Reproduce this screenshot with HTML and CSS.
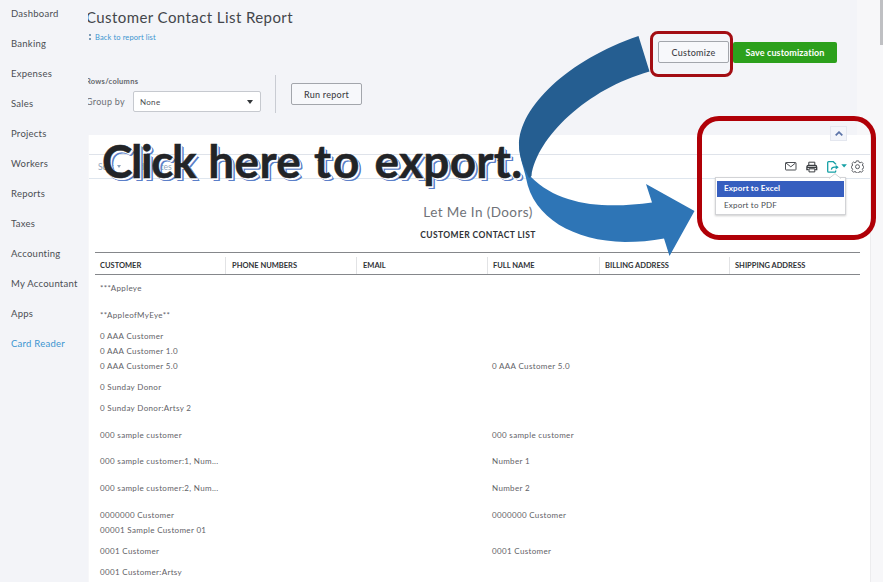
FILE: index.html
```html
<!DOCTYPE html>
<html lang="en">
<head>
<meta charset="UTF-8">
<meta name="viewport" content="width=device-width, initial-scale=1.0">
<title>Customer Contact List Report</title>
<link rel="stylesheet" href="styles.css">
</head>
<body>
    <nav class="sidebar">
        <a>Dashboard</a>
        <a>Banking</a>
        <a>Expenses</a>
        <a>Sales</a>
        <a>Projects</a>
        <a>Workers</a>
        <a>Reports</a>
        <a>Taxes</a>
        <a>Accounting</a>
        <a>My Accountant</a>
        <a>Apps</a>
        <a class="card-reader">Card Reader</a>
    </nav>

    <main class="main">
        <header class="header">
            <div class="header-left">
                <h1>Customer Contact List Report</h1>
                <div class="back"><span class="back-arrow"></span>Back to report list</div>
                <div class="filters">
                    <div class="group">
                        <div class="group-title">Rows/columns</div>
                        <div class="group-row">
                            <label>Group by</label>
                            <div class="select">None<span class="caret"></span></div>
                        </div>
                    </div>
                    <div class="divider"></div>
                    <button class="btn run">Run report</button>
                </div>
            </div>
            <div class="actions">
                <button class="btn customize">Customize</button>
                <button class="btn save">Save customization</button>
            </div>
            <div class="gutter"></div>
        </header>

        <section class="report">
            <div class="toolbar">
                <span class="sort">Sort</span><span class="sort-caret"></span>
                <span class="notes">Add notes</span>
                <div class="icons">
                    <svg class="mail" width="12" height="9" viewBox="0 0 12 9" fill="none" stroke="#4b4e53"><rect x=".5" y=".5" width="10.5" height="7.5" rx=".6"/><path d="M1 1l4.8 3.8L10.5 1"/></svg>
                    <svg class="print" width="12" height="12" viewBox="0 0 12 12" fill="none" stroke="#3a3d41"><path d="M2.8 4V1.2h6V4"/><path d="M2.5 8.7H.9V6.2q0-1.7 1.5-1.7h6.8q1.5 0 1.5 1.7v2.5H9.2" stroke-width="1.3"/><path d="M1 6.5h9.8" stroke-width="1.2"/><path d="M3 7.8h5.8v3.1H3z"/></svg>
                    <svg class="export" width="20" height="12" viewBox="0 0 20 12" fill="none" stroke="#14a0a5"><path d="M8.7 3.6V3L6.3.7H1.6q-.9 0-.9.9v8.6q0 .9.9.9h6.2q.9 0 .9-.9V9.6" stroke-width="1.3"/><path d="M4.4 8.6q.2-2.5 3-2.5h2" stroke-width="1.2"/><path d="M8.7 3.9l3 2.3-3 2.3z" fill="#14a0a5" stroke="none"/><path d="M14.3 3.2h5.6l-2.8 3.2z" fill="#14a0a5" stroke="none"/></svg>
                    <svg class="gear" width="13" height="13" viewBox="0 0 13 13" fill="none" stroke="#5c5f64"><path d="M5.3.9h2.4l.4 1.5 1 .4 1.4-.8 1.6 1.6-.8 1.4.4.9 1.1.3v1.8l-1.1.4-.4 1 .7 1.2-1.5 1.7-1.4-.8-1 .4-.4 1.1H5.3l-.4-1.1-1-.4-1.4.8L1 10.6l.7-1.2-.4-1L.3 8V6.2l1-.3.4-.9L.9 3.6 2.5 2l1.4.8 1-.4z"/><circle cx="6.5" cy="6.7" r="2"/></svg>
                </div>
            </div>
            <h2>Let Me In (Doors)</h2>
            <h3>CUSTOMER CONTACT LIST</h3>
            <div class="table">
                <div class="row head">
                    <span>CUSTOMER</span><span>PHONE NUMBERS</span><span>EMAIL</span><span>FULL NAME</span><span>BILLING ADDRESS</span><span>SHIPPING ADDRESS</span>
                </div>
                <div class="row tall"><span>***Appleye</span></div>
                <div class="row mid"><span>**AppleofMyEye**</span></div>
                <div class="row"><span>0 AAA Customer</span></div>
                <div class="row"><span>0 AAA Customer 1.0</span></div>
                <div class="row mid"><span>0 AAA Customer 5.0</span><span class="full">0 AAA Customer 5.0</span></div>
                <div class="row mid"><span>0 Sunday Donor</span></div>
                <div class="row tall"><span>0 Sunday Donor:Artsy 2</span></div>
                <div class="row tall"><span>000 sample customer</span><span class="full">000 sample customer</span></div>
                <div class="row tall"><span>000 sample customer:1, Num...</span><span class="full">Number 1</span></div>
                <div class="row tall"><span>000 sample customer:2, Num...</span><span class="full">Number 2</span></div>
                <div class="row"><span>0000000 Customer</span><span class="full">0000000 Customer</span></div>
                <div class="row mid"><span>00001 Sample Customer 01</span></div>
                <div class="row mid"><span>0001 Customer</span><span class="full">0001 Customer</span></div>
                <div class="row mid"><span>0001 Customer:Artsy</span></div>
            </div>
        </section>
    </main>

    <!-- page overlays -->
    <div class="collapse"><svg width="8" height="5" viewBox="0 0 8 5" fill="none" stroke="#5c74a8" stroke-width="1.8"><path d="M.7 4.3L4 1.2l3.3 3.1"/></svg></div>
    <div class="menu">
        <div class="menu-item active">Export to Excel</div>
        <div class="menu-item">Export to PDF</div>
    </div>
    <svg class="menu-tip" width="12" height="6" viewBox="0 0 12 6" fill="#fff" stroke="#d2d3d6"><path d="M0 5.500L6 .7l6 4.800"/></svg>
    <div class="scroll-thumb"></div>

    <!-- callouts -->
    <div class="callout-text"><span class="tight">Click</span> here <span class="loose">to</span> export.</div>
    <svg class="arrow" width="883" height="300" viewBox="0 0 883 300">
        <path fill="#2e75b6" d="M519 145C520 160 524 168 526 178C533 218 574 241 625 242Q645 242 664 238.500L669.500 256L694.500 211L646 184L652 202.500C605 209 560 206 531 177Z"/>
        <path fill="#255e91" d="M638.500 36C568 60 519 107 519 145C519 158 524 167 529 178L531.500 176C537 137 587 89 649.500 71.500Z"/>
    </svg>
    <div class="ring ring-customize"></div>
    <div class="ring ring-export"></div>
</body>
</html>
```

FILE: styles.css
```css
* {
    box-sizing: border-box;
}

body {
    margin: 0;
    display: flex;
    width: 883px;
    height: 582px;
    overflow: hidden;
    position: relative;
    background-color: #f7f7f9;
    font-family: Lato, sans-serif;
    color: #4b4e53;
}

h1, h2, h3 {
    margin: 0;
    font-weight: normal;
}

.sidebar {
    width: 88px;
    flex: none;
    padding-left: 11px;
    background-color: #f3f4f8;
}

.sidebar a {
    display: block;
    height: 30px;
    line-height: 28px;
    font-size: 9.5px;
    letter-spacing: 0.25px;
    white-space: nowrap;
}

.sidebar .card-reader {
    color: #3c94d0;
}

.main {
    width: 792px;
    overflow: hidden;
}

.header {
    display: flex;
    height: 135px;
    background-color: #f3f4f8;
}

.header-left {
    width: 570px;
    margin-left: -1px;
    padding-top: 7px;
}

h1 {
    font-size: 15px;
    line-height: 20px;
    letter-spacing: 0.42px;
    text-indent: -1px;
    color: #43464b;
}

.back {
    display: flex;
    align-items: center;
    height: 20px;
    font-size: 7.5px;
    letter-spacing: 0.12px;
    color: #3c94d0;
}

.back-arrow {
    width: 2px;
    height: 6px;
    margin: 0 4px 0 2px;
    border-top: 2px solid #7c9cb8;
    border-bottom: 2px solid #7c9cb8;
}

.filters {
    display: flex;
    margin-top: 28px;
}

.group {
    width: 188px;
}

.group-title {
    height: 16px;
    line-height: 13px;
    font-size: 7.5px;
    font-weight: bold;
    letter-spacing: 0.27px;
    text-indent: -1px;
    color: #65686d;
}

.group-row {
    display: flex;
    align-items: center;
}

.group-row label {
    width: 46px;
    font-size: 9px;
    letter-spacing: 0.3px;
    text-indent: -1px;
    color: #6c6f75;
    white-space: nowrap;
}

.select {
    display: flex;
    justify-content: space-between;
    align-items: center;
    width: 128px;
    height: 21px;
    padding: 0 7px 0 6px;
    border: 1px solid #c6c9cf;
    border-radius: 2px;
    background-color: #fff;
    font-size: 8px;
    letter-spacing: 0.3px;
}

.caret {
    border: 3px solid transparent;
    border-top: 4px solid #33363a;
    border-bottom: 0;
}

.divider {
    width: 1px;
    height: 38px;
    background-color: #c9ccd3;
}

.btn {
    height: 22px;
    padding: 0;
    border: 1px solid #a3a6ac;
    border-radius: 2px;
    background-color: #f7f8fb;
    font-family: inherit;
    font-size: 9px;
    font-weight: 500;
    letter-spacing: 0.25px;
    color: #3f4247;
    white-space: nowrap;
}

.run {
    width: 71px;
    margin: 8px 0 0 15px;
}

.actions {
    display: flex;
    width: 200px;
    padding-top: 41px;
}

.customize {
    width: 71px;
    margin: 0 4px 0 1px;
}

.save {
    width: 104px;
    height: 21px;
    margin-top: 1px;
    border: 0;
    background-color: #2ca01c;
    color: #fff;
    font-weight: bold;
    letter-spacing: 0.1px;
}

.gutter {
    flex: 1;
    background-color: #f7f7f9;
}

.report {
    width: 782px;
    height: 447px;
    margin-left: 1px;
    padding-top: 19px;
    border-right: 1px solid #ececee;
    background-color: #fff;
}

.toolbar {
    display: flex;
    align-items: center;
    height: 25px;
    padding-left: 9px;
    border-top: 1px solid #dfe3ea;
    border-bottom: 1px solid #dfe6ee;
    font-size: 8.5px;
    color: #8da4bd;
}

.sort-caret {
    margin-left: 3px;
    border: 2.5px solid transparent;
    border-top: 3px solid #8da4bd;
    border-bottom: 0;
}

.notes {
    margin-left: 13px;
}

.icons {
    display: flex;
    align-items: center;
    margin-left: auto;
    margin-right: 6px;
}

.print {
    margin-left: 9px;
}

.export {
    margin-left: 9px;
}

.gear {
    margin-left: 4px;
}

h2 {
    margin-top: 23px;
    padding-right: 3px;
    font-size: 13.5px;
    line-height: 20px;
    letter-spacing: 0.4px;
    text-align: center;
    color: #707378;
}

h3 {
    margin-top: 5px;
    padding-right: 3px;
    font-size: 8.5px;
    line-height: 16px;
    font-weight: bold;
    letter-spacing: 0.4px;
    text-align: center;
    color: #303236;
}

.table {
    width: 765px;
    margin: 9px 0 0 6px;
}

.row {
    display: grid;
    grid-template-columns: 130px 131px 131px 112px 130px 131px;
    height: 15.3px;
    line-height: 12px;
    font-size: 8px;
    letter-spacing: 0.34px;
    white-space: nowrap;
    color: #5f6267;
}

.row span {
    padding-left: 5px;
}

.row .full {
    grid-column: 4;
}

.mid {
    height: 21px;
}

.tall {
    height: 26.6px;
}

.head {
    height: 23px;
    margin-bottom: 7px;
    padding: 4px 0 1px;
    border-top: 1px solid #85878b;
    border-bottom: 1px solid #85878b;
    line-height: 17px;
    font-size: 7.5px;
    font-weight: bold;
    letter-spacing: 0;
    color: #303236;
}

.head span + span {
    padding-left: 6px;
    border-left: 1px solid #e2e3e5;
}

.head span:nth-child(n + 4) {
    padding-left: 5px;
}

.collapse {
    position: absolute;
    left: 830px;
    top: 126px;
    width: 17px;
    height: 15px;
    display: flex;
    align-items: center;
    justify-content: center;
    border: 1px solid #e4e7ef;
    background-color: #f3f5fa;
}

.menu {
    position: absolute;
    left: 715px;
    top: 177px;
    width: 131px;
    height: 38px;
    padding: 3px 1px 0;
    border: 1px solid #d2d3d6;
    background-color: #fff;
    box-shadow: 0 1px 2px rgba(0, 0, 0, 0.2);
}

.menu-item {
    height: 16px;
    padding-left: 7px;
    line-height: 17px;
    font-size: 8px;
    letter-spacing: 0.2px;
}

.menu-item.active {
    height: 16px;
    line-height: 15px;
    background-color: #365ebf;
    color: #fff;
    font-weight: bold;
    letter-spacing: 0.15px;
}

.menu-tip {
    position: absolute;
    left: 829px;
    top: 173px;
}

.scroll-thumb {
    position: absolute;
    left: 880px;
    top: 0;
    width: 3px;
    height: 45px;
    background-color: #bfc0c3;
}

.callout-text {
    position: absolute;
    left: 102px;
    top: 133px;
    line-height: 56px;
    font-size: 46px;
    font-weight: bold;
    letter-spacing: 0.3px;
    word-spacing: 1.5px;
    white-space: nowrap;
    color: #222427;
    -webkit-text-stroke: 0.5px #222427;
    text-shadow: 1px 1px 0 #fff, 1.5px 1.5px 0 #fff, 2px 2px 0 #5b7fc9, 2.5px 2.5px 0 #5b7fc9, 3px 3px 0 #5b7fc9;
}

.tight {
    letter-spacing: -1.4px;
}

.loose {
    letter-spacing: 2px;
}

.arrow {
    position: absolute;
    left: 0;
    top: 0;
}

.ring {
    position: absolute;
    border-style: solid;
}

.ring-customize {
    left: 650px;
    top: 31px;
    width: 83px;
    height: 46px;
    border-width: 3px;
    border-color: #a30d13;
    border-radius: 8px;
}

.ring-export {
    left: 697px;
    top: 116px;
    width: 179px;
    height: 124px;
    border-width: 5px;
    border-color: #b00007;
    border-radius: 22px;
}
```
